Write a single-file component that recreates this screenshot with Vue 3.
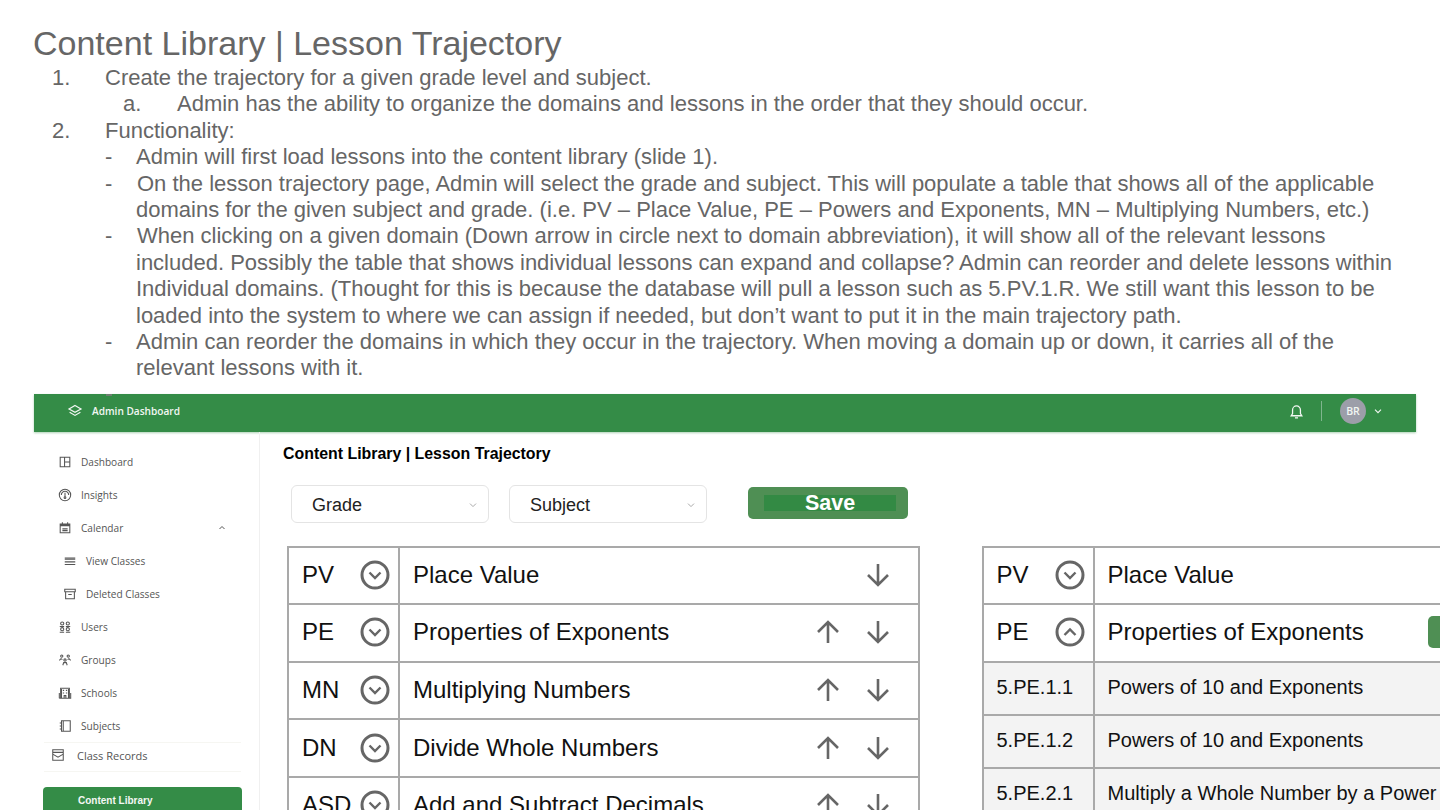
<template>
  <div class="slide">
    <section class="notes">
      <h1 class="notes-title">Content Library | Lesson Trajectory</h1>
      <div v-for="(item, i) in notes" :key="i" class="note" :class="item.level">
        <span class="marker">{{ item.marker }}</span>
        <span class="note-text">{{ item.text }}</span>
      </div>
    </section>

    <span class="cut-bullet"></span>

    <section class="app">
      <header class="topbar">
        <svg class="brand-icon" viewBox="0 0 16 16" fill="none" stroke="currentColor" stroke-width="1.2">
          <path d="M8 2.5l6 3.4-6 3.4-6-3.4z" />
          <path d="M2.6 9.2L8 12.4l5.4-3.2" />
        </svg>
        <span class="brand">Admin Dashboard</span>
        <svg class="bell" viewBox="0 0 16 16" fill="none" stroke="currentColor" stroke-width="1.2">
          <path d="M3 12h10l-1.3-2V6.5a3.7 3.7 0 0 0-7.4 0V10z" />
          <path d="M6.6 14h2.8" />
        </svg>
        <span class="divider"></span>
        <span class="avatar">BR</span>
        <svg class="top-chevron" viewBox="0 0 10 10" fill="none" stroke="currentColor" stroke-width="1.1">
          <path d="M2 3.6l3 3 3-3" />
        </svg>
      </header>

      <div class="layout">
        <aside class="sidebar">
          <div v-for="link in links" :key="link.label" class="link" :class="{ sub: link.sub }">
            <svg class="link-icon" viewBox="0 0 16 16" fill="none" stroke="currentColor" stroke-width="1.2">
              <path :d="link.icon" />
            </svg>
            <span>{{ link.label }}</span>
            <svg v-if="link.open" class="link-chevron" viewBox="0 0 10 10" fill="none" stroke="currentColor" stroke-width="1">
              <path d="M2.5 6l2.5-2.5L7.5 6" />
            </svg>
          </div>
          <div class="link records">
            <svg class="link-icon" viewBox="0 0 16 16" fill="none" stroke="currentColor" stroke-width="1.2">
              <path d="M2 2h12v12H2zM2 5h12M2 7l6 3.5L14 7" />
            </svg>
            <span>Class Records</span>
          </div>
          <div class="library">Content Library</div>
        </aside>

        <main class="content">
          <h2 class="page-title">Content Library | Lesson Trajectory</h2>

          <div class="filters">
            <div v-for="name in ['Grade', 'Subject']" :key="name" class="select">
              <span>{{ name }}</span>
              <svg viewBox="0 0 10 10" fill="none" stroke="currentColor" stroke-width="1">
                <path d="M2 3.6l3 3 3-3" />
              </svg>
            </div>
            <div class="save"><span>Save</span></div>
          </div>

          <div class="tables">
            <div class="table">
              <div v-for="row in domains" :key="row.code" class="row">
                <div class="code">
                  <span>{{ row.code }}</span>
                  <svg class="toggle" viewBox="0 0 30 30" fill="none" stroke="#666" stroke-width="3">
                    <circle cx="15" cy="15" r="13" />
                    <path stroke-width="2.4" d="M9.5 12.5l5.5 5.5 5.5-5.5" />
                  </svg>
                </div>
                <div class="name">
                  <span>{{ row.name }}</span>
                  <div class="moves">
                    <svg v-if="row.up" class="arrow" viewBox="0 0 24 24" fill="none" stroke="#666" stroke-width="2.6">
                      <path d="M12 23V2M2 12L12 2l10 10" />
                    </svg>
                    <svg class="arrow" viewBox="0 0 24 24" fill="none" stroke="#666" stroke-width="2.6">
                      <path d="M12 1v21M2 12l10 10 10-10" />
                    </svg>
                  </div>
                </div>
              </div>
            </div>

            <div class="table">
              <div class="row">
                <div class="code">
                  <span>PV</span>
                  <svg class="toggle" viewBox="0 0 30 30" fill="none" stroke="#666" stroke-width="3">
                    <circle cx="15" cy="15" r="13" />
                    <path stroke-width="2.4" d="M9.5 12.5l5.5 5.5 5.5-5.5" />
                  </svg>
                </div>
                <div class="name"><span>Place Value</span></div>
              </div>
              <div class="row">
                <div class="code">
                  <span>PE</span>
                  <svg class="toggle" viewBox="0 0 30 30" fill="none" stroke="#666" stroke-width="3">
                    <circle cx="15" cy="15" r="13" />
                    <path stroke-width="2.4" d="M9.5 18l5.5-5.5 5.5 5.5" />
                  </svg>
                </div>
                <div class="name">
                  <span>Properties of Exponents</span>
                  <div class="row-button"></div>
                </div>
              </div>
              <div v-for="lesson in lessons" :key="lesson.code" class="row lesson">
                <div class="code">{{ lesson.code }}</div>
                <div class="name">{{ lesson.name }}</div>
              </div>
            </div>
          </div>
        </main>
      </div>
    </section>
  </div>
</template>

<script setup>
const notes = [
  { level: 'first', marker: '1.', text: 'Create the trajectory for a given grade level and subject.' },
  { level: 'alpha', marker: 'a.', text: 'Admin has the ability to organize the domains and lessons in the order that they should occur.' },
  { level: 'first', marker: '2.', text: 'Functionality:' },
  { level: 'dash', marker: '-', text: 'Admin will first load lessons into the content library (slide 1).' },
  {
    level: 'dash nudge',
    marker: '-',
    text: 'On the lesson trajectory page, Admin will select the grade and subject. This will populate a table that shows all of the applicable\ndomains for the given subject and grade. (i.e. PV – Place Value, PE – Powers and Exponents, MN – Multiplying Numbers, etc.)'
  },
  {
    level: 'dash nudge',
    marker: '-',
    text: 'When clicking on a given domain (Down arrow in circle next to domain abbreviation), it will show all of the relevant lessons\nincluded. Possibly the table that shows individual lessons can expand and collapse? Admin can reorder and delete lessons within\nIndividual domains. (Thought for this is because the database will pull a lesson such as 5.PV.1.R. We still want this lesson to be\nloaded into the system to where we can assign if needed, but don’t want to put it in the main trajectory path.'
  },
  {
    level: 'dash',
    marker: '-',
    text: 'Admin can reorder the domains in which they occur in the trajectory. When moving a domain up or down, it carries all of the\nrelevant lessons with it.'
  }
]

const links = [
  { label: 'Dashboard', icon: 'M2.5 2.5h11v11h-11zM7.5 2.5v11M7.5 8h6' },
  { label: 'Insights', icon: 'M8 1.5a6.5 6.5 0 1 0 0 13a6.5 6.5 0 0 0 0-13zM3.8 8a4.2 4.2 0 0 1 8.4 0M8 5.5v4M7 11a1 1 0 1 0 2 0a1 1 0 0 0-2 0z' },
  { label: 'Calendar', open: true, icon: 'M2.5 3.5h11v10h-11zM3 4.5h10M3 5.5h10M5 1.5v2M11 1.5v2M5 9h6M5 11h6' },
  { label: 'View Classes', sub: true, icon: 'M2 4.5h12M2 6h12M2 9h12M2 12h12' },
  { label: 'Deleted Classes', sub: true, icon: 'M2 2.5h12v3H2zM3 5.5v8h10v-8M6 8.5h4' },
  { label: 'Users', icon: 'M3 4a1.8 1.8 0 1 0 3.6 0a1.8 1.8 0 0 0-3.6 0zM9.4 4a1.8 1.8 0 1 0 3.6 0a1.8 1.8 0 0 0-3.6 0zM3 10.5a1.8 1.8 0 1 0 3.6 0a1.8 1.8 0 0 0-3.6 0zM9.4 10.5a1.8 1.8 0 1 0 3.6 0a1.8 1.8 0 0 0-3.6 0zM2 7.5h5M9 7.5h5M2 14h5M9 14h5' },
  { label: 'Groups', icon: 'M3 3.5a1.3 1.3 0 1 0 2.6 0a1.3 1.3 0 0 0-2.6 0zM10.4 3.5a1.3 1.3 0 1 0 2.6 0a1.3 1.3 0 0 0-2.6 0zM6.7 8a1.3 1.3 0 1 0 2.6 0a1.3 1.3 0 0 0-2.6 0zM1.5 8.5l2-2 1.5 1M14.5 8.5l-2-2-1.5 1M5.5 14l1-3h3l1 3' },
  { label: 'Schools', icon: 'M3 14V2.5h10V14M1.5 14h13V8M1.5 14V8M5.5 5h1.5M9 5h1.5M5.5 8h1.5M9 8h1.5M7 14v-3h2v3M4 3.5v10M12 3.5v10' },
  { label: 'Subjects', icon: 'M4 2h10v12H4zM2 4.5h2M2 8h2M2 11.5h2M6 2v12' }
]

const domains = [
  { code: 'PV', name: 'Place Value', up: false },
  { code: 'PE', name: 'Properties of Exponents', up: true },
  { code: 'MN', name: 'Multiplying Numbers', up: true },
  { code: 'DN', name: 'Divide Whole Numbers', up: true },
  { code: 'ASD', name: 'Add and Subtract Decimals', up: true }
]

const lessons = [
  { code: '5.PE.1.1', name: 'Powers of 10 and Exponents' },
  { code: '5.PE.1.2', name: 'Powers of 10 and Exponents' },
  { code: '5.PE.2.1', name: 'Multiply a Whole Number by a Power of 10' }
]
</script>

<style scoped>
.slide {
  position: relative;
  width: 1440px;
  height: 810px;
  overflow: hidden;
  background: #fff;
  font-family: "Liberation Sans", Arial, sans-serif;
}

/* notes above the screenshot */
.notes {
  box-sizing: border-box;
  height: 394px;
  padding-top: 24px;
  color: #666;
  font-size: 22px;
  line-height: 26.4px;
}

.notes-title {
  margin: 0;
  padding-left: 33px;
  height: 41px;
  font-size: 34px;
  font-weight: 400;
  line-height: 38px;
}

.note {
  display: flex;
  white-space: pre;
}

.first {
  padding-left: 52px;
}

.first .marker {
  flex: 0 0 53px;
}

.alpha {
  padding-left: 123px;
}

.alpha .marker {
  flex: 0 0 54px;
}

.dash {
  padding-left: 105px;
}

.dash .marker {
  flex: 0 0 31px;
}

.nudge .note-text {
  text-indent: 1px;
}

/* top of a clipped bullet that peeks out over the green bar */
.cut-bullet {
  position: absolute;
  left: 106px;
  top: 394px;
  width: 6px;
  height: 2px;
  background: #6f7f72;
}

/* dashboard screenshot */
.app {
  margin-left: 34px;
  width: 1406px;
}

.topbar {
  display: flex;
  align-items: center;
  box-sizing: border-box;
  width: 1382px;
  height: 38px;
  padding: 0 33px 4px;
  background: #348c47;
  box-shadow: 0 1px 2px rgba(52, 140, 71, 0.4);
  color: #f2f7f3;
}

.brand-icon {
  width: 16px;
  height: 16px;
}

.brand {
  margin-left: 9px;
  font-family: "Open Sans", sans-serif;
  font-size: 10.1px;
  font-weight: 600;
}

.bell {
  width: 17px;
  height: 17px;
  margin-left: auto;
}

.divider {
  width: 1px;
  height: 20px;
  margin: 0 18px 0 16px;
  background: #7fb58e;
}

.avatar {
  display: flex;
  align-items: center;
  justify-content: center;
  width: 26px;
  height: 26px;
  border-radius: 50%;
  background: #9c9ea9;
  font-family: "Open Sans", sans-serif;
  font-size: 10.5px;
  font-weight: 600;
}

.top-chevron {
  width: 10px;
  height: 10px;
  margin-left: 7px;
}

.layout {
  display: flex;
}

.sidebar {
  flex: 0 0 226px;
  box-sizing: border-box;
  height: 378px;
  padding-top: 13px;
  border-right: 1px solid #f0f0f0;
  color: #555;
  font-family: "Open Sans", sans-serif;
  font-size: 10.1px;
}

.link {
  display: flex;
  align-items: center;
  gap: 9px;
  height: 33px;
  padding-left: 24px;
}

.link.sub {
  padding-left: 29px;
}

.link-icon {
  flex: none;
  width: 14px;
  height: 14px;
}

.link-chevron {
  width: 10px;
  height: 10px;
  margin-left: 85px;
}

.records {
  box-sizing: border-box;
  gap: 12px;
  height: 30px;
  margin: 0 18px 0 10px;
  padding: 0 0 4px 7px;
  border-top: 1px solid #f6f6f2;
  border-bottom: 1px solid #f6f6f2;
  font-size: 11px;
}

.library {
  box-sizing: border-box;
  width: 199px;
  height: 34px;
  margin: 15px 0 0 9px;
  padding: 8px 0 0 35px;
  border-radius: 4px;
  background: #348c47;
  color: #f4f8f5;
  font-family: "Liberation Sans", Arial, sans-serif;
  font-size: 10px;
  font-weight: 700;
  line-height: 12px;
}

.content {
  flex: none;
  width: 1180px;
  padding-left: 23px;
}

.page-title {
  margin: 0;
  padding-top: 13px;
  color: #000;
  font-size: 15.9px;
  font-weight: 700;
  line-height: 18px;
}

.filters {
  display: flex;
  align-items: flex-start;
  gap: 20px;
  margin: 22px 0 0 8px;
}

.select {
  display: flex;
  align-items: center;
  justify-content: space-between;
  box-sizing: border-box;
  width: 198px;
  height: 38px;
  padding: 2px 10px 0 20px;
  border: 1px solid #e4e4e4;
  border-radius: 6px;
  color: #222;
  font-size: 18px;
}

.select svg {
  width: 10px;
  height: 10px;
  color: #aaa;
}

.save {
  display: flex;
  justify-content: center;
  box-sizing: border-box;
  width: 160px;
  height: 32px;
  margin: 2px 0 0 21px;
  padding: 8px 12px 0 16px;
  border-radius: 5px;
  background: #4f8f54;
  color: #fff;
  font-size: 21.5px;
  font-weight: 700;
}

.save span {
  flex: 1;
  height: 16px;
  background: #338a44;
  line-height: 16px;
  text-align: center;
}

.tables {
  display: flex;
  gap: 61.5px;
  margin: 22.5px 0 0 4px;
}

.table {
  flex: none;
  width: 633px;
  border: solid #a9a9a9;
  border-width: 2px 2px 0;
  box-sizing: border-box;
}

.row {
  display: flex;
  box-sizing: border-box;
  height: 57.6px;
  border-bottom: 2px solid #a9a9a9;
  color: #111;
  font-size: 24px;
}

.code {
  display: flex;
  align-items: center;
  justify-content: space-between;
  flex: 0 0 111px;
  box-sizing: border-box;
  padding: 0 8px 1px 13px;
  border-right: 2px solid #a9a9a9;
}

.toggle {
  flex: none;
  width: 30px;
  height: 30px;
}

.name {
  display: flex;
  align-items: center;
  flex: 1;
  padding: 0 0 1px 13px;
  white-space: nowrap;
}

.moves {
  display: flex;
  gap: 26px;
  margin-left: auto;
  padding-right: 28px;
}

.arrow {
  width: 24px;
  height: 24px;
}

.row-button {
  flex: none;
  width: 80px;
  height: 32px;
  margin-left: 64px;
  border-radius: 5px;
  background: #4f8f54;
}

.lesson {
  height: 53px;
  background: #f3f3f3;
  font-size: 20px;
}

.lesson .code {
  padding-right: 0;
}
</style>

<style>
html,
body {
  margin: 0;
  overflow: hidden;
}
</style>
